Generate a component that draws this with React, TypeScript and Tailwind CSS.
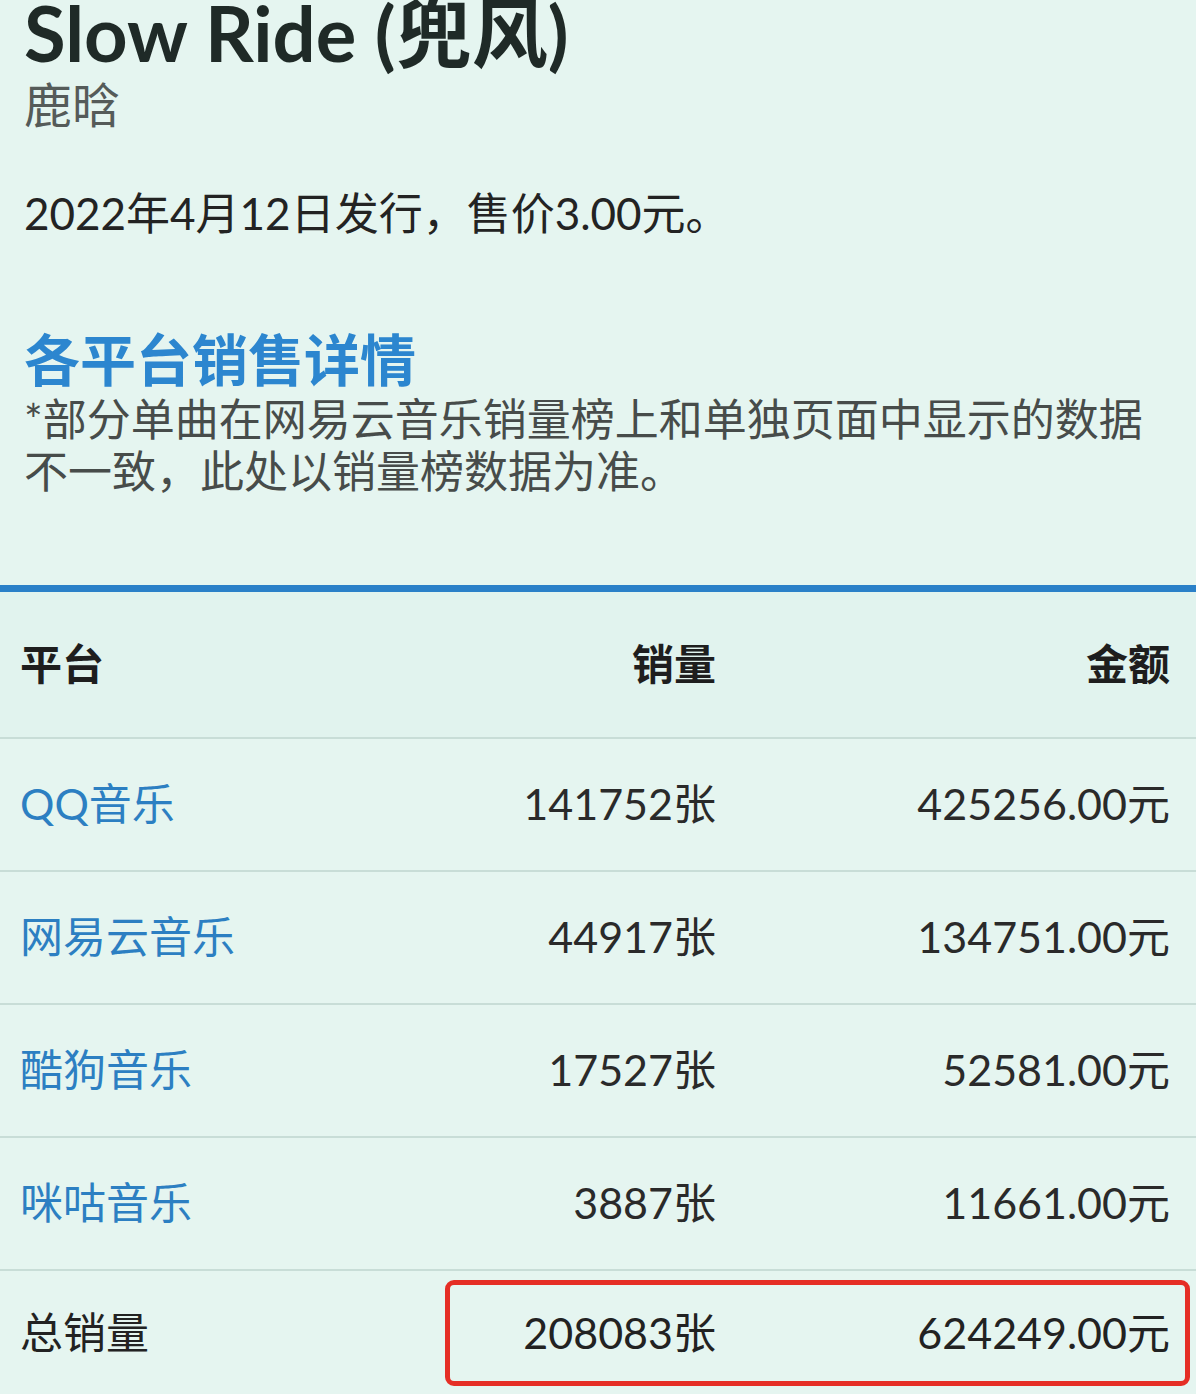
import React from "react";

const rows = [
  { name: "QQ音乐", qty: "141752张", amt: "425256.00元" },
  { name: "网易云音乐", qty: "44917张", amt: "134751.00元" },
  { name: "酷狗音乐", qty: "17527张", amt: "52581.00元" },
  { name: "咪咕音乐", qty: "3887张", amt: "11661.00元" },
];

export default function App() {
  return (
    <div
      className="w-[1196px] h-[1394px] overflow-hidden bg-[#e5f5f0] text-[#262626]"
      style={{ fontFamily: 'Lato, "Noto Sans CJK SC", sans-serif' }}
    >
      <div className="px-[24px]">
        <div className="mt-[-17px] text-[76px] leading-[100px] font-bold text-[#1f2a27] whitespace-nowrap">Slow Ride (兜风)</div>
        <div className="text-[48px] leading-[52px] text-[#555b59] mt-[-4px]">鹿晗</div>
        <div className="mt-[52px] text-[44px] leading-[60px] text-[#232323]">2022年4月12日发行，售价3.00元。</div>
        <div className="mt-[84px] text-[56px] leading-[66px] font-bold text-[#2c86cf]">各平台销售详情</div>
        <div className="mt-[0px] text-[44px] leading-[52px] text-[#474c4a] whitespace-nowrap">
          *部分单曲在网易云音乐销量榜上和单独页面中显示的数据
          <br />
          不一致，此处以销量榜数据为准。
        </div>
      </div>
      <div className="mt-[88px] h-[7px] bg-[#2a80c8]" />
      <div className="flex items-center h-[147px] pl-[20px] pr-[26px] bg-[#e1f3ee] border-b-2 border-[#c8ddd7] text-[42px] font-bold text-[#1e1e1e]">
        <div className="flex-1">平台</div>
        <div className="w-[300px] text-right">销量</div>
        <div className="w-[454px] text-right">金额</div>
      </div>
      {rows.map((r) => (
        <div
          key={r.name}
          className="flex items-center h-[133px] pl-[20px] pr-[26px] border-b-2 border-[#c8ddd7] text-[43px]"
        >
          <div className="flex-1 text-[#2c7fc2]">{r.name}</div>
          <div className="w-[300px] text-right text-[#2a2a2a]">{r.qty}</div>
          <div className="w-[454px] text-right text-[#2a2a2a]">{r.amt}</div>
        </div>
      ))}
      <div className="flex items-center h-[124px] pl-[20px] pr-[6px] text-[43px]">
        <div className="flex-1 text-[#222]">总销量</div>
        <div className="flex items-center w-[745px] h-[106px] border-[5px] border-[#e52e25] rounded-[9px] pr-[15px]">
          <div className="flex-1 text-right text-[#222]">208083张</div>
          <div className="w-[454px] text-right text-[#222]">624249.00元</div>
        </div>
      </div>
    </div>
  );
}
